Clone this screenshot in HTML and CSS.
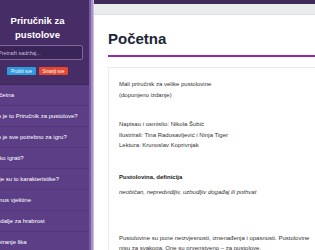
FILE: index.html
```html
<!DOCTYPE html>
<html lang="hr">
<head>
    <meta charset="UTF-8">
    <meta name="viewport" content="width=device-width, initial-scale=1.0">
    <title>Priručnik za pustolove</title>
    <link rel="stylesheet" href="styles.css">
</head>
<body>
    <div class="layout">
        <aside class="sidebar">
            <div class="sidebar-header">
                <h1>Priručnik za pustolove</h1>
                <input type="text" class="search" placeholder="Pretraži sadržaj...">
                <div class="toggle-buttons">
                    <button class="btn btn-expand">Proširi sve</button>
                    <button class="btn btn-collapse">Smanji sve</button>
                </div>
            </div>
            <ul class="nav">
                <li>Početna</li>
                <li>Što je to Priručnik za pustolove?</li>
                <li>Što je sve potrebno za igru?</li>
                <li>Kako igrati?</li>
                <li>Koje su to karakteristike?</li>
                <li>Bonus vještine</li>
                <li>Medalje za hrabrost</li>
                <li>Kreiranje lika</li>
            </ul>
        </aside>
        <div class="sidebar-edge"></div>

        <main class="main">
            <div class="topbar"></div>
            <div class="content">
                <h2 class="page-title">Početna</h2>
                <div class="card">
                    <p>Mali priručnik za velike pustolovine<br>(dopunjeno izdanje)</p>
                    <p class="credits">Napisao i osmislio: Nikola Šubić<br>Ilustrirali: Tina Radosavljević i Ninja Tiger<br>Lektura: Krunoslav Koprivnjak</p>
                    <p class="term">Pustolovina, definicija</p>
                    <p class="definition">neobičan, nepredvidljiv, uzbudljiv događaj ili pothvat</p>
                    <p class="intro">Pustolovine su pune neizvjesnosti, iznenađenja i opasnosti. Pustolovine nisu za svakoga. One su prvenstveno – za pustolove.</p>
                </div>
            </div>
        </main>
    </div>
</body>
</html>
```

FILE: styles.css
```css
body {
    font-family: 'Liberation Sans', Arial, sans-serif;
    margin: 0;
    padding: 0;
    background: #3d2a56;
    overflow: hidden;
}

.layout {
    display: flex;
    height: 100vh;
    margin-left: -14px;
}

.sidebar {
    width: 103px;
    flex-shrink: 0;
    background: #5c3e86;
    color: white;
}

.sidebar-header {
    background: #472d66;
    padding: 14px 6px 9px;
    text-align: center;
    border-bottom: 1px solid #3e275a;
}

.sidebar-header h1 {
    font-size: 9.5px;
    line-height: 14px;
    margin: 0 0 3px 0;
}

.search {
    display: block;
    width: 100%;
    box-sizing: border-box;
    height: 15px;
    background: #3b2457;
    border: 1px solid #7e6a9b;
    border-radius: 2px;
    padding: 0 5px;
    font-family: inherit;
    font-size: 5.5px;
    color: #ddd;
}

.search::placeholder {
    color: #c8bcd8;
}

.toggle-buttons {
    display: flex;
    justify-content: center;
    gap: 3px;
    margin-top: 7px;
}

.btn {
    width: 29px;
    height: 8px;
    border: none;
    border-radius: 1px;
    padding: 0;
    font-family: inherit;
    font-size: 4.5px;
    color: white;
}

.btn-expand {
    background: #2e9ade;
}

.btn-collapse {
    background: #e4462f;
}

.nav {
    list-style: none;
    margin: 0;
    padding: 0;
}

.nav li {
    height: 20px;
    line-height: 20px;
    padding: 0 6px;
    font-size: 6px;
    white-space: nowrap;
    border-bottom: 1px solid #523678;
    overflow: hidden;
}

.sidebar-edge {
    width: 5px;
    flex-shrink: 0;
    background: linear-gradient(to right, #7a5aa0 0, #7a5aa0 2px, #a88fc7 2px, #a88fc7 4px, #cdbde0 4px);
}

.main {
    flex: 1;
    background: white;
    min-width: 0;
}

.topbar {
    height: 10px;
    border-top: 4px solid #3d2a56;
    background: #e9ebec;
    border-bottom: 1px solid #dde0e1;
}

.content {
    padding: 14px 0 0 14px;
}

.page-title {
    font-size: 15px;
    line-height: 20px;
    color: #1c2636;
    margin: 0 0 10px 0;
    padding-bottom: 6px;
    border-bottom: 2px solid #9228ad;
}

.card {
    border: 1px solid #ececec;
    border-right: none;
    padding: 11px 0 11px 10px;
    font-size: 6px;
    line-height: 10.5px;
    color: #333;
}

.card p {
    margin: 0;
}

.credits {
    padding-top: 19px;
}

.term {
    padding-top: 21px;
    font-weight: bold;
    color: #222;
}

.definition {
    padding-top: 5px;
    font-style: italic;
}

.intro {
    padding-top: 35px;
}
```
